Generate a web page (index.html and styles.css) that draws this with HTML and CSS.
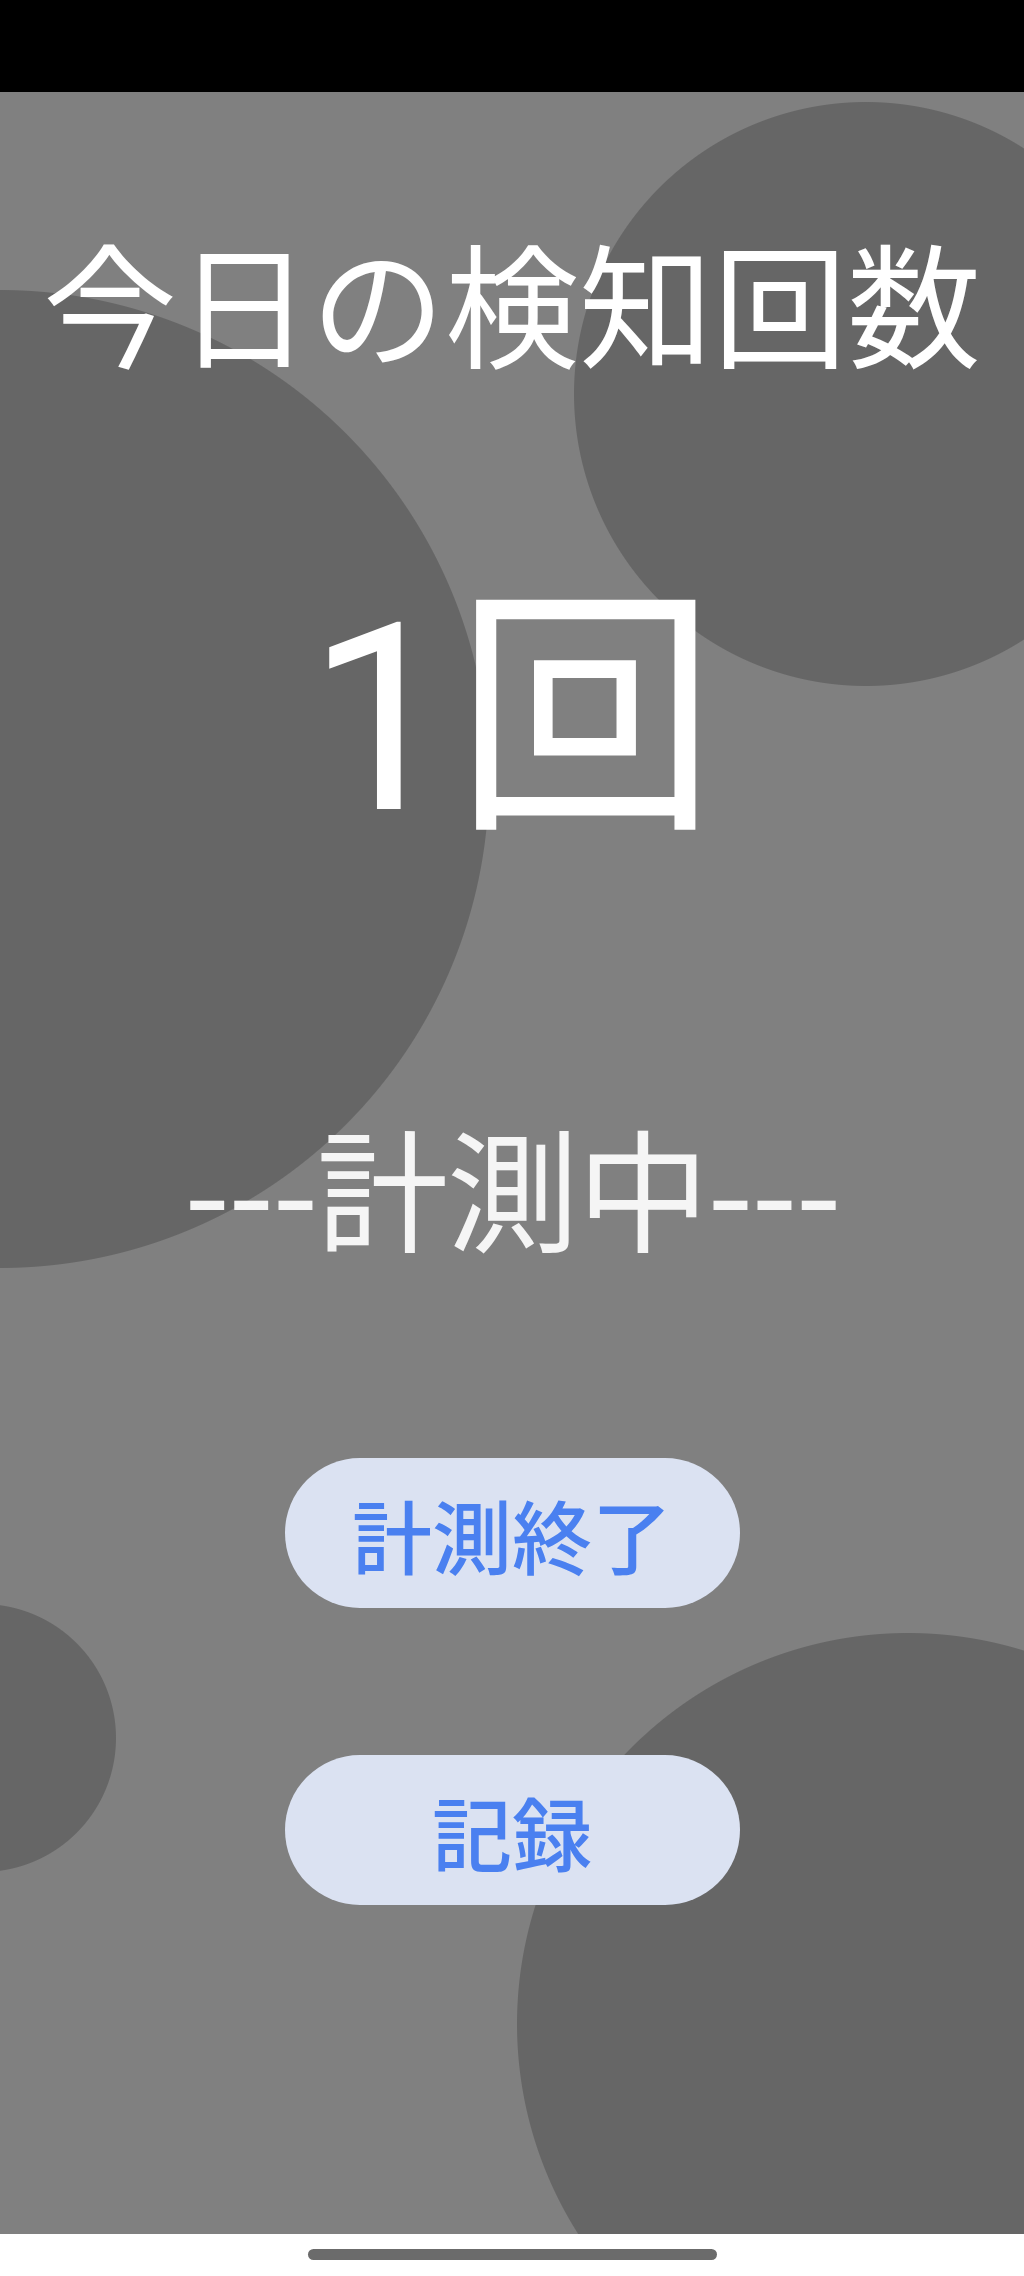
FILE: index.html
```html
<!DOCTYPE html>
<html lang="ja">
<head>
<meta charset="utf-8">
<title>今日の検知回数</title>
<link rel="stylesheet" href="styles.css">
</head>
<body>
<div class="phone">
  <div class="status-bar"></div>
  <main class="screen">
    <h1 class="title">今日の検知回数</h1>
    <div class="count">1回</div>
    <div class="state">---計測中---</div>
    <div class="actions">
      <button class="pill-btn" type="button">計測終了</button>
      <button class="pill-btn" type="button">記録</button>
    </div>
  </main>
  <div class="nav-bar"><span class="home-indicator"></span></div>
</div>
</body>
</html>
```
FILE: styles.css
```css
html, body {
  margin: 0;
  padding: 0;
  background: #ffffff;
}

.phone {
  width: 1024px;
  height: 2276px;
  display: flex;
  flex-direction: column;
  font-family: "Noto Sans CJK JP", "Noto Sans", sans-serif;
  overflow: hidden;
}

.status-bar {
  height: 92px;
  flex: none;
  background: #000000;
}

.screen {
  flex: none;
  height: 2142px;
  display: flex;
  flex-direction: column;
  align-items: center;
  padding-top: 141px;
  box-sizing: border-box;
  background-color: #808080;
  background-image:
    radial-gradient(circle 292px at 866px 302px, #666666 291.5px, rgba(102,102,102,0) 292.5px),
    radial-gradient(circle 489px at 0px 687px, #666666 488.5px, rgba(102,102,102,0) 489.5px),
    radial-gradient(circle 134px at -18px 1646px, #666666 133.5px, rgba(102,102,102,0) 134.5px),
    radial-gradient(circle 391px at 908px 1932px, #666666 390.5px, rgba(102,102,102,0) 391.5px);
  background-repeat: no-repeat;
}

.title {
  margin: 0;
  font-size: 134px;
  line-height: 134px;
  font-weight: 400;
  color: #ffffff;
  white-space: nowrap;
}

.count {
  margin-top: 222px;
  font-family: Roboto, "Noto Sans CJK JP", sans-serif;
  font-size: 262px;
  line-height: 262px;
  font-weight: 400;
  color: #ffffff;
  white-space: nowrap;
}

.state {
  margin-top: 268px;
  font-size: 132px;
  line-height: 132px;
  letter-spacing: -1.7px;
  color: #f5f5f5;
  white-space: nowrap;
}

.actions {
  margin-top: 207px;
  display: flex;
  flex-direction: column;
  align-items: center;
  gap: 147px;
}

.pill-btn {
  width: 455px;
  height: 150px;
  border: none;
  border-radius: 75px;
  background: #dbe2f2;
  color: #4a80f0;
  font-family: "Noto Sans CJK JP", "Noto Sans", sans-serif;
  font-size: 80px;
  font-weight: 500;
  line-height: 1;
  padding: 0;
  display: flex;
  align-items: center;
  justify-content: center;
}

.nav-bar {
  flex: 1;
  background: #ffffff;
  display: flex;
  justify-content: center;
  padding-top: 15px;
  box-sizing: border-box;
}

.home-indicator {
  width: 409px;
  height: 11px;
  border-radius: 6px;
  background: #6b6b6b;
}
```
